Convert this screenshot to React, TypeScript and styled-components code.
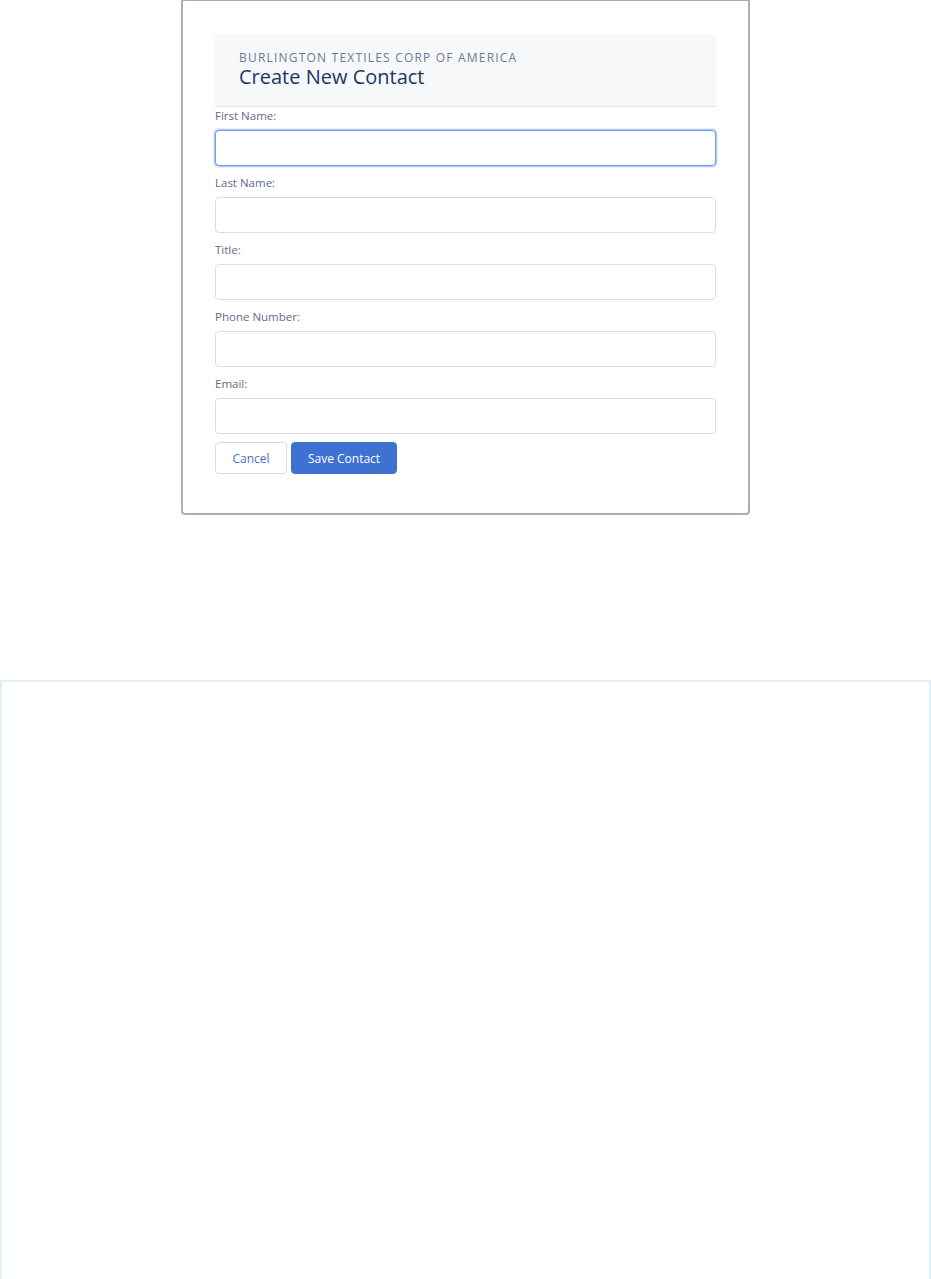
import React from "react";
import styled, { createGlobalStyle } from "styled-components";

const Global = createGlobalStyle`
  html, body { margin: 0; padding: 0; background: #ffffff; }
  body { font-family: "Open Sans", "Noto Sans", Arial, sans-serif; }
  * { box-sizing: border-box; }
`;

const Page = styled.div`
  display: flex;
  flex-direction: column;
  align-items: center;
  width: 931px;
`;

const Modal = styled.div`
  width: 569px;
  height: 515px;
  border: 2px solid #a9aeb8;
  border-top-width: 1px;
  border-radius: 0 0 4px 4px;
  background: #ffffff;
  padding: 33px 32px 0 32px;
  display: flex;
  flex-direction: column;
`;

const Header = styled.div`
  height: 73px;
  background: #f7f8fa;
  border-bottom: 1px solid #dfe2e8;
  padding: 16px 24px 0 24px;
  display: flex;
  flex-direction: column;
`;

const Subtitle = styled.div`
  font-size: 12px;
  line-height: 16px;
  letter-spacing: 1.2px;
  color: #6b7a99;
  text-transform: uppercase;
`;

const Title = styled.h2`
  margin: 0;
  font-size: 20px;
  font-weight: 400;
  line-height: 22px;
  color: #1e3563;
`;

const Form = styled.form`
  display: flex;
  flex-direction: column;
  gap: 8px;
`;

const Field = styled.div`
  display: flex;
  flex-direction: column;
  gap: 5px;
`;

const Label = styled.label`
  font-size: 11.5px;
  line-height: 18px;
  color: #5d6c8a;
`;

const Input = styled.input<{ $focused?: boolean }>`
  width: 100%;
  height: 36px;
  border: 1px solid ${(p) => (p.$focused ? "#6d9cee" : "#dbdde4")};
  border-radius: 4px;
  box-shadow: ${(p) => (p.$focused ? "0 0 2px 1px #9dbcf3" : "none")};
  outline: none;
  padding: 0 12px;
  font-size: 13px;
  font-family: inherit;
  background: #fff;
`;

const Actions = styled.div`
  display: flex;
  gap: 4px;
`;

const Button = styled.button<{ $primary?: boolean }>`
  height: 32px;
  padding: 0;
  white-space: nowrap;
  border-radius: 4px;
  font-family: inherit;
  font-size: 12px;
  border: 1px solid ${(p) => (p.$primary ? "#3f71d3" : "#dbdde4")};
  background: ${(p) => (p.$primary ? "#3f71d3" : "#ffffff")};
  color: ${(p) => (p.$primary ? "#ffffff" : "#4a72cf")};
  width: ${(p) => (p.$primary ? "106px" : "72px")};
  cursor: pointer;
`;

const Spacer = styled.div`
  height: 165px;
`;

const Frame = styled.div`
  width: 931px;
  height: 620px;
  border: 2px solid #dff0fa;
  border-bottom: none;
`;

const fields = ["First Name:", "Last Name:", "Title:", "Phone Number:", "Email:"];

export default function App() {
  return (
    <>
      <Global />
      <Page>
        <Modal>
          <Header>
            <Subtitle>Burlington Textiles Corp of America</Subtitle>
            <Title>Create New Contact</Title>
          </Header>
          <Form onSubmit={(e) => e.preventDefault()}>
            {fields.map((f, i) => (
              <Field key={f}>
                <Label>{f}</Label>
                <Input $focused={i === 0} />
              </Field>
            ))}
            <Actions>
              <Button type="button">Cancel</Button>
              <Button type="button" $primary>
                Save Contact
              </Button>
            </Actions>
          </Form>
        </Modal>
        <Spacer />
        <Frame />
      </Page>
    </>
  );
}
